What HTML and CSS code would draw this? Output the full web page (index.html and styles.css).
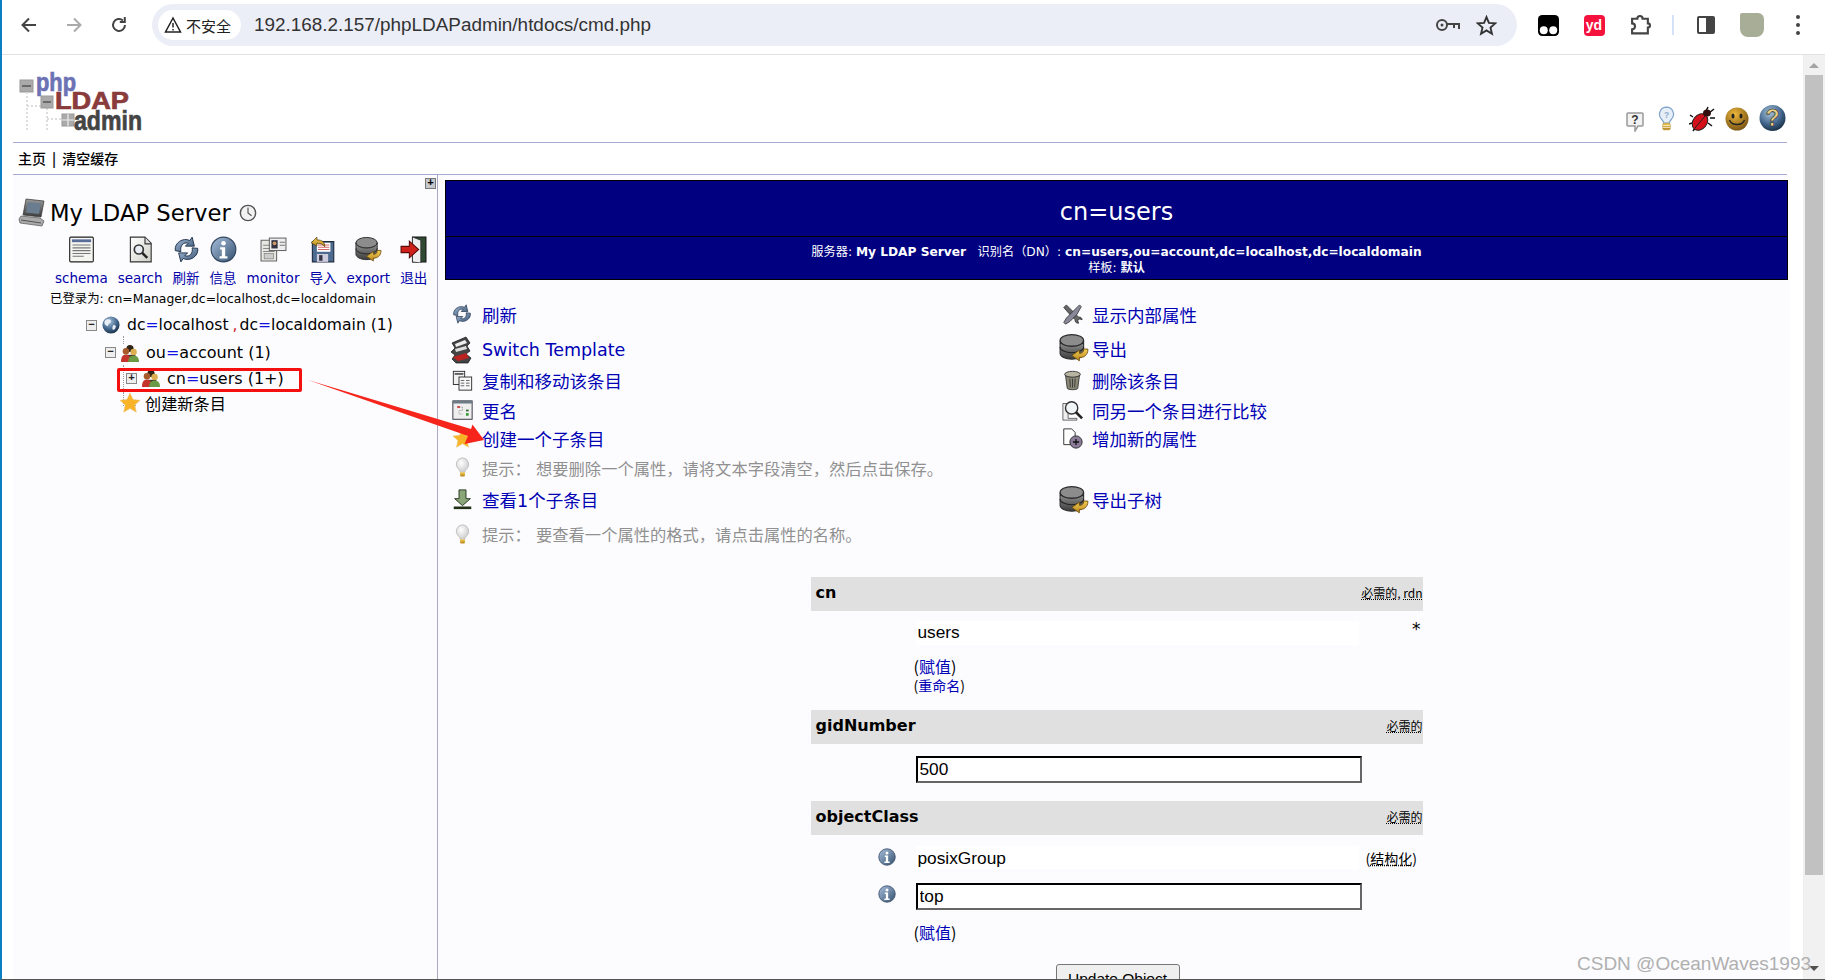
FILE: index.html
```html
<!DOCTYPE html>
<html lang="zh">
<head>
<meta charset="utf-8">
<title>phpLDAPadmin</title>
<link rel="stylesheet" href="styles.css">
</head>
<body>
<svg class="defs" aria-hidden="true">
<defs>
<linearGradient id="gBlue" x1="0" y1="0" x2="1" y2="1"><stop offset="0" stop-color="#a9c0dc"/><stop offset="1" stop-color="#33506f"/></linearGradient>
<linearGradient id="gGray" x1="0" y1="0" x2="0" y2="1"><stop offset="0" stop-color="#9a9a9a"/><stop offset="1" stop-color="#3c3c3c"/></linearGradient>
<linearGradient id="gPaper" x1="0" y1="0" x2="1" y2="1"><stop offset="0" stop-color="#fff"/><stop offset="1" stop-color="#cfcfc8"/></linearGradient>
<linearGradient id="gGold" x1="0" y1="0" x2="0" y2="1"><stop offset="0" stop-color="#f3cf55"/><stop offset="1" stop-color="#b8841c"/></linearGradient>
<radialGradient id="gSmile" cx=".4" cy=".3" r=".8"><stop offset="0" stop-color="#eeb83a"/><stop offset="1" stop-color="#6d4a10"/></radialGradient>
<radialGradient id="gBall" cx=".4" cy=".3" r=".8"><stop offset="0" stop-color="#a8c4dd"/><stop offset=".6" stop-color="#3c5f85"/><stop offset="1" stop-color="#10202f"/></radialGradient>
<radialGradient id="gBulb" cx=".4" cy=".35" r=".7"><stop offset="0" stop-color="#fff"/><stop offset="1" stop-color="#c8c8c8"/></radialGradient>
<symbol id="i-schema" viewBox="0 0 24 24"><rect x="1.500" y="1" width="21" height="22" rx="1" fill="#f4f4f0" stroke="#222"/><rect x="3.500" y="3" width="17" height="2.500" fill="#5a6d9a"/><path d="M4 8h16M4 10.500h16M4 13h16M4 15.500h16M4 18h10" stroke="#777" stroke-width="1"/></symbol>
<symbol id="i-search" viewBox="0 0 24 24"><path d="M3 1h13l5.500 5.500V23H3z" fill="url(#gPaper)" stroke="#333"/><path d="M16 1v6h5.500" fill="#ddd" stroke="#333"/><circle cx="10.500" cy="12" r="4" fill="#e8eef4" stroke="#333" stroke-width="1.500"/><path d="M13.500 15l4.500 4.500" stroke="#222" stroke-width="2.200"/></symbol>
<symbol id="i-refresh" viewBox="0 0 24 24"><path d="M2 13C1 6 9 1 15 4l2-3 2 8-8 0 2.500-2.500C9 5 6 9 7 14z" fill="url(#gBlue)" stroke="#1c2c44" stroke-width=".8"/><path d="M22 11c1 7-7 12-13 9l-2 3-2-8 8 0-2.500 2.500c4.500 1.500 7.500-2.500 6.500-7z" fill="url(#gBlue)" stroke="#1c2c44" stroke-width=".8"/></symbol>
<symbol id="i-info" viewBox="0 0 24 24"><circle cx="12" cy="12" r="11" fill="url(#gBlue)" stroke="#31465f"/><circle cx="12" cy="6.500" r="2" fill="#fff"/><path d="M9 10h4.500v8H15.500v2h-7v-2H10.500v-6H9z" fill="#fff"/></symbol>
<symbol id="i-monitor" viewBox="0 0 26 24"><path d="M1 3h15v20H1z" fill="#e6e6e2" stroke="#666"/><path d="M3 8h6M3 11h11M3 14h11" stroke="#888"/><rect x="4" y="16" width="9" height="5" fill="#ccc" stroke="#777" stroke-width=".6"/><rect x="9" y="1" width="16" height="12" fill="#eee" stroke="#666"/><rect x="11" y="3" width="6" height="8" fill="#334"/><circle cx="14" cy="6" r="1.800" fill="#c96"/><path d="M19 5h5M19 8h5" stroke="#777"/></symbol>
<symbol id="i-import" viewBox="0 0 24 24"><path d="M3 5h19v18H3z" fill="#4c6b8f" stroke="#1d2b3e"/><rect x="7" y="6" width="12" height="8" fill="#fff"/><path d="M8 8h10M8 10h10M8 12h10" stroke="#c55" stroke-width=".8"/><rect x="7" y="16" width="10" height="7" fill="#ccd"/><rect x="9" y="17" width="3" height="5" fill="#334"/><path d="M2 6L7 1v2.500c5 0 7 2 7 6-1.500-2.500-4-3-7-3V9z" fill="url(#gGold)" stroke="#5d430c" stroke-width=".7"/></symbol>
<symbol id="i-export" viewBox="0 0 28 26"><ellipse cx="12" cy="6" rx="11" ry="5.500" fill="#8c8c8c" stroke="#2d2d2d"/><path d="M1 6v12c0 3 5 5.500 11 5.500S23 21 23 18V6c0 3-5 5.500-11 5.500S1 9 1 6z" fill="url(#gGray)" stroke="#2d2d2d"/><path d="M1 12c0 3 5 5.500 11 5.500S23 15 23 12" fill="none" stroke="#222"/><path d="M27 14c0 6-4 8-8 8v3l-7-5 7-5v3c2.500 0 4-1 4-4z" fill="url(#gGold)" stroke="#6b4c0c" stroke-width=".8"/></symbol>
<symbol id="i-logout" viewBox="0 0 26 26"><path d="M12 1h13v24H12z" fill="#2f4a32" stroke="#111"/><path d="M12 1l8 3v22l-8-1z" fill="#eee" stroke="#222" stroke-width=".7"/><path d="M1 10h8V5l9 8-9 8v-5H1z" fill="#d0201a" stroke="#5a0c08"/></symbol>
<symbol id="i-server" viewBox="0 0 28 30"><path d="M8 1l18 2-3 16-18-2z" fill="url(#gGray)" stroke="#333" stroke-width=".7"/><path d="M10 4l13 1.500-2 10.500-13-1.500z" fill="#6a7c8f"/><path d="M3 18l19 2 4 3-2 5-22-3-1-4z" fill="#aaa" stroke="#555" stroke-width=".7"/><path d="M3 22l20 3" stroke="#555"/></symbol>
<symbol id="i-clock" viewBox="0 0 20 20"><circle cx="10" cy="10" r="8.500" fill="#f2f2f2" stroke="#555" stroke-width="1.600"/><path d="M10 4v6l4 3" fill="none" stroke="#555" stroke-width="1.300"/></symbol>
<symbol id="i-globe" viewBox="0 0 20 20"><circle cx="10" cy="10" r="9.500" fill="url(#gBall)"/><path d="M5 4c3-1 5 0 5 2s-3 2-3 4-3 1-4-1 0-4 2-5zM13 10c2 0 3 1 2 3s-2 3-3 2 0-5 1-5z" fill="#e8eef4"/></symbol>
<symbol id="i-people" viewBox="0 0 20 20"><circle cx="10" cy="5" r="4" fill="#2e2418"/><path d="M4 12h12v7H4z" fill="#3a3a2a"/><circle cx="5.500" cy="8" r="3.600" fill="#a85a2a"/><path d="M0 20c0-6 2-8 5.500-8S11 14 11 20z" fill="#c4342a"/><circle cx="14" cy="9" r="3.600" fill="#dcae50"/><path d="M8 20c0-5 2-7 6-7s6 2 6 7z" fill="#6a9a44"/></symbol>
<symbol id="i-star" viewBox="0 0 24 24"><path d="M12 1l3.300 7.300 7.700.8-5.800 5.200 1.700 7.700L12 18l-6.900 4 1.700-7.700L1 9.100l7.700-.8z" fill="#f9b326" stroke="#e9c77a" stroke-width=".6"/></symbol>
<symbol id="i-bulb" viewBox="0 0 20 26"><path d="M10 1a8 8 0 0 0-5 14c1.500 1.500 2 2.500 2 4h6c0-1.500.5-2.500 2-4a8 8 0 0 0-5-14z" fill="url(#gBulb)" stroke="#bbb"/><rect x="7" y="19" width="6" height="5" rx="1" fill="url(#gGold)"/></symbol>
<symbol id="i-bulbq" viewBox="0 0 18 26"><path d="M9 1a7.500 7.500 0 0 0-5 13c1.500 1.500 2 2.500 2 4h6c0-1.500.5-2.500 2-4a7.500 7.500 0 0 0-5-13z" fill="#e6eef8" stroke="#7fa4cc" stroke-width="1.300"/><text x="9" y="12" class="svg-q">?</text><rect x="5" y="18" width="8" height="7" rx="1.500" fill="url(#gGold)" stroke="#a98a2c" stroke-width=".6"/><path d="M5 20.500h8M5 22.500h8" stroke="#fff" stroke-width=".7"/></symbol>
<symbol id="i-tools" viewBox="0 0 24 24"><path d="M2 4l3-3 8 8 6 6c2-.5 4 1 4 3l-3-1-2 2 1 3c-3 0-4.500-2-4-4L9 12z" fill="#666" stroke="#222" stroke-width=".8"/><path d="M22 3l-2-2-7 7-8 8-3 5 2 2 5-3 8-8z" fill="#889" stroke="#222" stroke-width=".8"/></symbol>
<symbol id="i-trash" viewBox="0 0 24 24"><ellipse cx="12" cy="5" rx="9" ry="3.500" fill="#b8b4a2" stroke="#333"/><path d="M4 6l2 15c1 2 11 2 12 0l2-15c-2 3-14 3-16 0z" fill="#8b8877" stroke="#333"/><path d="M9 10l.5 10M12 10v10M15 10l-.5 10" stroke="#333"/></symbol>
<symbol id="i-compare" viewBox="0 0 24 24"><path d="M1 4h6v17h10v2H1z" fill="#eee" stroke="#333" stroke-width=".8"/><circle cx="11" cy="9" r="7" fill="#f2f5f8" stroke="#333" stroke-width="1.600"/><path d="M16 14l7 7" stroke="#222" stroke-width="3"/></symbol>
<symbol id="i-add" viewBox="0 0 24 24"><path d="M2 1h9l4 4v14H2z" fill="#fff" stroke="#222"/><circle cx="16" cy="16" r="7" fill="#8b7c9a" stroke="#222"/><path d="M12.500 16h7M16 12.500v7" stroke="#111" stroke-width="1.500"/></symbol>
<symbol id="i-copy" viewBox="0 0 24 24"><rect x="1.500" y="1.500" width="13" height="15" fill="#f0f0f0" stroke="#222"/><path d="M3 4.500h10" stroke="#555" stroke-width="2"/><rect x="8" y="8" width="14.500" height="15" fill="#f8f8f8" stroke="#222"/><path d="M10 12h4M16 12h4M10 15h4M16 15h4M10 18h4M16 18h4" stroke="#555"/></symbol>
<symbol id="i-rename" viewBox="0 0 24 24"><rect x="1" y="1" width="22" height="21" fill="#eee" stroke="#223"/><rect x="1" y="1" width="22" height="3" fill="#6c7a86"/><path d="M7 8h5v4H8v4h4" fill="none" stroke="#999" stroke-dasharray="1.500 1"/><rect x="6" y="7" width="3" height="2" fill="#c33"/><rect x="16" y="11" width="3" height="2" fill="#363"/><rect x="16" y="15" width="3" height="3" fill="#393"/></symbol>
<symbol id="i-down" viewBox="0 0 24 24"><path d="M8 1h8v10h5l-9 8-9-8h5z" fill="#8aa679" stroke="#1d2b16"/><rect x="2" y="20" width="20" height="3" fill="#223018"/></symbol>
<symbol id="i-switch" viewBox="0 0 28 28"><path d="M4 7l14-6 4 6-3 3 3 5-4 3 5 4-3 5H8l-4-4 3-4-4-3 4-4z" fill="#444" stroke="#111" stroke-width=".7"/><path d="M7 8l10-4 2 3-11 4z" fill="#eee"/><path d="M7 13l11-3 1 3-11 3z" fill="#ddd"/><path d="M5 21l13-4 3 5-11 3z" fill="#b22"/></symbol>
</defs>
</svg>

<div class="browser">
  <header class="toolbar">
    <div class="nav-buttons">
      <svg class="tb-icon" viewBox="0 0 20 20"><path d="M17 10H4M10 3.500L3.500 10l6.500 6.500" class="stroke-dark"/></svg>
      <svg class="tb-icon" viewBox="0 0 20 20"><path d="M3 10h13M10 3.500l6.500 6.500-6.500 6.500" class="stroke-muted"/></svg>
      <svg class="tb-icon" viewBox="0 0 20 20"><path d="M16 10a6 6 0 1 1-2-4.500" class="stroke-dark"/><path d="M15.800 2v5h-5" class="stroke-dark"/></svg>
    </div>
    <div class="omnibox">
      <div class="security">
        <svg class="warn" viewBox="0 0 18 18"><path d="M9 2L1.500 16h15zM9 7v4.500M9 13v1.500" fill="none" stroke="#222" stroke-width="1.500"/></svg>
        <span>不安全</span>
      </div>
      <span class="url">192.168.2.157/phpLDAPadmin/htdocs/cmd.php</span>
      <div class="omni-actions">
        <svg class="key" viewBox="0 0 26 16"><circle cx="7" cy="8" r="5" fill="none" stroke="#444" stroke-width="2"/><circle cx="7" cy="8" r="1.500" fill="#444"/><path d="M12 7h12v5M19 7v4" fill="none" stroke="#444" stroke-width="2"/></svg>
        <svg class="star" viewBox="0 0 20 20"><path d="M10 2l2.300 5.500 6 .5-4.500 4 1.400 5.800L10 14.700l-5.200 3.100 1.400-5.800-4.500-4 6-.5z" fill="none" stroke="#333" stroke-width="1.800"/></svg>
      </div>
    </div>
    <div class="extensions">
      <div class="ext"><svg class="ext-icon" viewBox="0 0 20 20"><rect x="0" y="0" width="20" height="20" rx="4" fill="#000"/><circle cx="5.500" cy="14.500" r="3.800" fill="#fff"/><circle cx="14.500" cy="14.500" r="3.800" fill="#fff"/></svg></div>
      <div class="ext"><div class="yd">yd</div></div>
      <div class="ext"><svg class="ext-icon" viewBox="0 0 20 20"><path d="M2 4h5a2.500 2.500 0 0 1 5 0h5v4.500a2 2 0 0 1 0 4V18H2v-4a2.500 2.500 0 0 0 0-5.500z" transform="translate(0 -.5)" fill="none" stroke="#444" stroke-width="2"/></svg></div>
      <div class="ext-sep"></div>
      <div class="ext"><div class="panel"><div class="panel-fill"></div></div></div>
      <div class="ext"><div class="avatar"></div></div>
      <div class="ext"><div class="dots"><i></i><i></i><i></i></div></div>
    </div>
  </header>

  <div class="viewport">
    <div class="page">
      <div class="masthead">
        <svg class="logo" viewBox="0 0 124 60">
          <rect x="1" y="8" width="13" height="12" fill="#aaa" stroke="#999"/><path d="M3 14h9" stroke="#555" stroke-width="1.500"/>
          <path d="M8 20v38M8 34h14M28 36v22M28 47h14" stroke="#ddd" stroke-width="2" stroke-dasharray="2 2"/>
          <rect x="22" y="24" width="12" height="12" fill="#aaa" stroke="#999"/><path d="M24 30h8" stroke="#555" stroke-width="1.500"/>
          <rect x="43" y="42" width="12" height="12" fill="#aaa" stroke="#999"/><path d="M49 42v12M43 48h12" stroke="#eee" stroke-width="1.200"/>
          <text x="17" y="19" class="logo-php" textLength="40" lengthAdjust="spacingAndGlyphs">php</text>
          <text x="36" y="37" class="logo-ldap" textLength="74" lengthAdjust="spacingAndGlyphs">LDAP</text>
          <text x="55" y="58" class="logo-admin" textLength="68" lengthAdjust="spacingAndGlyphs">admin</text>
        </svg>
        <div class="top-icons">
          <svg class="ti-help" viewBox="0 0 18 20"><path d="M2 1h14a1 1 0 0 1 1 1v11a1 1 0 0 1-1 1h-4l-3 5v-5H2a1 1 0 0 1-1-1V2a1 1 0 0 1 1-1z" fill="#f2f2f2" stroke="#999" stroke-width="1.500"/><text x="9" y="11.500" class="svg-q svg-q-dark">?</text></svg>
          <svg class="ti-bulb"><use href="#i-bulbq"/></svg>
          <svg class="ti-bug" viewBox="0 0 26 27"><path d="M4 12L1 10M3 18l-3 1M6 23l-2 3M17 6l2-4M20 8l5-4M21 13l5 0M19 18l4 3" stroke="#111" stroke-width="1.500"/><ellipse cx="11" cy="17" rx="7" ry="9" transform="rotate(38 11 17)" fill="#d4101a" stroke="#222"/><ellipse cx="18" cy="8" rx="4" ry="3.500" fill="#331010"/><path d="M6 23L16 11" stroke="#222"/></svg>
          <svg class="ti-smile" viewBox="0 0 24 25"><circle cx="12" cy="12" r="11.500" fill="url(#gSmile)"/><ellipse cx="8" cy="9" rx="1.500" ry="2.600" fill="#222"/><ellipse cx="16" cy="9" rx="1.500" ry="2.600" fill="#222"/><path d="M4.500 13c2 6 13 6 15 0" fill="none" stroke="#222" stroke-width="1.300"/></svg>
          <svg class="ti-q" viewBox="0 0 27 28"><circle cx="13.500" cy="14" r="13" fill="url(#gBall)"/><text x="13.500" y="22" class="svg-q svg-q-big">?</text></svg>
        </div>
      </div>
      <div class="rule"></div>
      <nav class="crumbs"><a>主页</a><span class="bar">|</span><a>清空缓存</a></nav>
      <div class="rule"></div>

      <div class="main">
        <aside class="sidebar">
          <div class="side-toggle"><span class="toggle">+</span></div>
          <h2 class="server-title">
            <svg class="server-icon"><use href="#i-server"/></svg>
            <span>My LDAP Server</span>
            <svg class="clock-icon"><use href="#i-clock"/></svg>
          </h2>
          <div class="tools">
            <a class="tool"><svg class="tool-icon"><use href="#i-schema"/></svg><span>schema</span></a>
            <a class="tool"><svg class="tool-icon"><use href="#i-search"/></svg><span>search</span></a>
            <a class="tool"><svg class="tool-icon"><use href="#i-refresh"/></svg><span>刷新</span></a>
            <a class="tool"><svg class="tool-icon"><use href="#i-info"/></svg><span>信息</span></a>
            <a class="tool"><svg class="tool-icon"><use href="#i-monitor"/></svg><span>monitor</span></a>
            <a class="tool"><svg class="tool-icon"><use href="#i-import"/></svg><span>导入</span></a>
            <a class="tool"><svg class="tool-icon"><use href="#i-export"/></svg><span>export</span></a>
            <a class="tool"><svg class="tool-icon"><use href="#i-logout"/></svg><span>退出</span></a>
          </div>
          <div class="logged">已登录为: cn=Manager,dc=localhost,dc=localdomain</div>
          <ul class="tree">
            <li class="node node-1"><span class="exp">−</span><svg class="node-icon"><use href="#i-globe"/></svg><span class="node-text">dc<b class="eq">=</b>localhost<b class="comma">,</b>dc<b class="eq">=</b>localdomain (1)</span></li>
            <li class="node node-2"><span class="exp">−</span><svg class="node-icon"><use href="#i-people"/></svg><span class="node-text">ou<b class="eq">=</b>account (1)</span></li>
            <li class="node node-3"><span class="exp">+</span><svg class="node-icon"><use href="#i-people"/></svg><span class="node-text">cn<b class="eq">=</b>users (1+)</span></li>
            <li class="node node-4"><svg class="node-icon star-icon"><use href="#i-star"/></svg><span class="node-new">创建新条目</span></li>
          </ul>
        </aside>

        <section class="content">
          <div class="banner">
            <div class="banner-title">cn=users</div>
            <div class="banner-sub">
              <div>服务器: <b>My LDAP Server</b> &nbsp; 识别名（DN）: <b>cn=users,ou=account,dc=localhost,dc=localdomain</b></div>
              <div>样板: <b>默认</b></div>
            </div>
          </div>

          <div class="actions">
            <a class="act"><span class="act-ic"><svg class="ic18"><use href="#i-refresh"/></svg></span>刷新</a>
            <a class="act"><span class="act-ic"><svg class="ic20"><use href="#i-tools"/></svg></span>显示内部属性</a>
            <a class="act act-latin"><span class="act-ic"><svg class="ic28"><use href="#i-switch"/></svg></span>Switch Template</a>
            <a class="act"><span class="act-ic"><svg class="ic30"><use href="#i-export"/></svg></span>导出</a>
            <a class="act"><span class="act-ic"><svg class="ic20"><use href="#i-copy"/></svg></span>复制和移动该条目</a>
            <a class="act"><span class="act-ic"><svg class="ic20"><use href="#i-trash"/></svg></span>删除该条目</a>
            <a class="act"><span class="act-ic"><svg class="ic20"><use href="#i-rename"/></svg></span>更名</a>
            <a class="act"><span class="act-ic"><svg class="ic20"><use href="#i-compare"/></svg></span>同另一个条目进行比较</a>
            <a class="act"><span class="act-ic"><svg class="ic20"><use href="#i-star"/></svg></span>创建一个子条目</a>
            <a class="act"><span class="act-ic"><svg class="ic20"><use href="#i-add"/></svg></span>增加新的属性</a>
            <div class="hint"><span class="act-ic"><svg class="ic20"><use href="#i-bulb"/></svg></span><span class="hint-label">提示：</span>想要删除一个属性，请将文本字段清空，然后点击保存。</div>
            <a class="act"><span class="act-ic"><svg class="ic20"><use href="#i-down"/></svg></span>查看1个子条目</a>
            <a class="act"><span class="act-ic"><svg class="ic30"><use href="#i-export"/></svg></span>导出子树</a>
            <div class="hint"><span class="act-ic"><svg class="ic20"><use href="#i-bulb"/></svg></span><span class="hint-label">提示：</span>要查看一个属性的格式，请点击属性的名称。</div>
          </div>

          <form class="attrs">
            <div class="attr-head"><span class="attr-name">cn</span><span class="attr-notes"><u>必需的</u>, <u>rdn</u></span></div>
            <div class="attr-row row-first">
              <span></span><div class="value-box">users</div><span class="note-star">*</span>
            </div>
            <div class="attr-links links-cn">
              <div class="link-line">(<a>赋值</a>)</div>
              <div class="link-line small">(<a>重命名</a>)</div>
            </div>

            <div class="attr-head"><span class="attr-name">gidNumber</span><span class="attr-notes"><u>必需的</u></span></div>
            <div class="attr-row row-input">
              <span></span><input class="value-input" value="500"><span></span>
            </div>

            <div class="attr-head head-obj"><span class="attr-name">objectClass</span><span class="attr-notes"><u>必需的</u></span></div>
            <div class="attr-row row-obj">
              <span class="attr-info"><svg class="ic16"><use href="#i-info"/></svg></span><div class="value-box box-obj">posixGroup</div><span class="note-struct">(<u>结构化</u>)</span>
            </div>
            <div class="attr-row row-second">
              <span class="attr-info"><svg class="ic16"><use href="#i-info"/></svg></span><input class="value-input" value="top"><span></span>
            </div>
            <div class="attr-links links-obj">
              <div class="link-line">(<a>赋值</a>)</div>
            </div>
            <div class="submit"><button type="button" class="update">Update Object</button></div>
          </form>
        </section>
      </div>
    </div>
    <div class="scrollbar">
      <div class="arrow-up"></div>
      <div class="thumb"></div>
      <div class="arrow-down"></div>
    </div>
  </div>

  <div class="red-box"></div>
  <svg class="red-arrow" viewBox="0 0 185 70"><path d="M2 1L165 50 166.500 45.500 178 61 158.500 65 162 57z" fill="#f6251c"/></svg>
  <div class="watermark">CSDN @OceanWaves1993</div>
</div>
</body>
</html>
```
FILE: styles.css
```css
* { box-sizing: border-box; }
html, body { margin: 0; padding: 0; height: 980px; overflow: hidden; background: #fff; }
body { font-family: "DejaVu Sans", "Noto Sans CJK SC", sans-serif; color: #000; }
.defs { display: block; width: 0; height: 0; }

.browser { position: relative; width: 1825px; height: 980px; display: flex; flex-direction: column; border-left: 2px solid #0b7fc4; border-bottom: 1px solid #555; overflow: hidden; }

/* browser chrome */
.toolbar { height: 55px; flex: none; display: flex; align-items: center; border-bottom: 1px solid #e2e2e2; padding-bottom: 4px; background: #fff; }
.nav-buttons { display: flex; gap: 25px; width: 150px; padding-left: 17px; align-items: center; }
.tb-icon { width: 20px; height: 20px; flex: none; }
.stroke-dark { fill: none; stroke: #444; stroke-width: 2; }
.stroke-muted { fill: none; stroke: #aaa; stroke-width: 2; }
.omnibox { width: 1365px; height: 42px; flex: none; background: #ebeef7; border-radius: 21px; display: flex; align-items: center; padding-left: 6px; padding-right: 20px; }
.security { height: 30px; width: 83px; background: #fff; border-radius: 15px; display: flex; align-items: center; gap: 4px; padding-left: 6px; font-size: 15px; font-family: "Noto Sans CJK SC", sans-serif; color: #222; }
.warn { width: 18px; height: 18px; }
.url { margin-left: 13px; font: 18.900px "Liberation Sans", sans-serif; color: #333; flex: 1; }
.omni-actions { display: flex; align-items: center; gap: 15px; }
.key { width: 26px; height: 16px; }
.star { width: 21px; height: 21px; }
.extensions { display: flex; align-items: center; margin-left: 8px; }
.ext { width: 46px; height: 40px; display: flex; align-items: center; justify-content: center; }
.ext-icon { width: 21px; height: 21px; }
.yd { width: 21px; height: 21px; border-radius: 4px; background: #f5123c; color: #fff; font: 700 14px/20px "Liberation Sans", sans-serif; text-align: center; }
.ext-sep { width: 2px; height: 20px; background: #d3e2f7; margin: 0 9px; }
.panel { width: 18px; height: 18px; border: 2px solid #444; border-radius: 2px; display: flex; justify-content: flex-end; }
.panel-fill { width: 7px; background: #444; }
.avatar { width: 24px; height: 24px; background: #a8ad97; border-radius: 2px 6px 8px 8px; }
.dots { display: flex; flex-direction: column; gap: 4px; }
.dots i { display: block; width: 4px; height: 4px; border-radius: 50%; background: #444; }

.viewport { flex: 1; display: flex; min-height: 0; }
.page { flex: 1; min-width: 0; padding-left: 11px; padding-right: 13px; overflow: hidden; }
.scrollbar { width: 22px; flex: none; background: #f1f1f1; display: flex; flex-direction: column; align-items: center; padding: 0 1px 0 0; border-left: 1px solid #eee; }
.arrow-up { width: 0; height: 0; margin: 8px 0 7px; border-left: 5px solid transparent; border-right: 5px solid transparent; border-bottom: 5px solid #a3a3a3; flex: none; }
.thumb { width: 18px; height: 800px; background: #c1c1c1; flex: none; }
.arrow-down { width: 0; height: 0; margin-top: auto; margin-bottom: 8px; border-left: 5px solid transparent; border-right: 5px solid transparent; border-top: 5px solid #505050; flex: none; }

/* masthead */
.masthead { height: 87px; display: flex; justify-content: space-between; align-items: flex-end; padding-bottom: 10px; background: #fff; }
.logo { width: 124px; height: 60px; margin-left: 6px; flex: none; overflow: visible; }
.logo-php { font: 700 25px "Liberation Sans", sans-serif; fill: #6c72b4; stroke: #6c72b4; stroke-width: .7; }
.logo-ldap { font: 700 24px "Liberation Sans", sans-serif; fill: #8a3b3b; stroke: #8a3b3b; stroke-width: .7; }
.logo-admin { font: 700 28px "Liberation Sans", sans-serif; fill: #444; stroke: #444; stroke-width: .7; }
.top-icons { display: flex; align-items: flex-end; gap: 14px; margin-right: 4px; }
.ti-help { width: 18px; height: 20px; }
.ti-bulb { width: 17px; height: 27px; }
.ti-bug { width: 26px; height: 27px; }
.ti-smile { width: 24px; height: 25px; margin-left: -4px; }
.ti-q { width: 27px; height: 28px; margin-left: -4px; }
.svg-q { font: 700 9px "Liberation Sans", sans-serif; fill: #8fa9c9; text-anchor: middle; }
.svg-q-dark { font-size: 12px; fill: #333; }
.svg-q-big { font-size: 23px; fill: #e6cf88; stroke: #222; stroke-width: .6; }

.rule { height: 1px; background: #a8a8d3; width: 1774px; }
.crumbs { height: 31px; display: flex; align-items: center; gap: 6px; padding: 0 0 2px 5px; font-size: 14px; background: #fff; font-family: "Noto Sans CJK SC", sans-serif; font-weight: 500; }
.crumbs .bar { font-weight: 700; color: #111; }

/* two panels */
.main { display: flex; height: 806px; background: #fcfcff; }
.sidebar { width: 425px; flex: none; border-right: 1px solid #a9a9c6; }
.side-toggle { height: 15px; display: flex; justify-content: flex-end; padding: 3px 1px 0 0; }
.toggle { width: 11px; height: 11px; background: #c4c8cc; border: 1px solid #777; font: 700 11px/8px "Liberation Mono", monospace; text-align: center; color: #000; }
.server-title { height: 46px; margin: 0; display: flex; align-items: center; padding-left: 5px; font-weight: 400; font-size: 22.700px; white-space: nowrap; }
.server-icon { width: 28px; height: 30px; flex: none; margin-right: 4px; }
.clock-icon { width: 18px; height: 18px; margin-left: 8px; }
.tools { height: 53px; display: flex; gap: 10px; padding-left: 42px; }
.tool { display: flex; flex-direction: column; align-items: center; color: #0000a8; font-size: 13.500px; line-height: 20px; white-space: nowrap; }
.tool-icon { width: 27px; height: 27px; margin-bottom: 5px; flex: none; }
.logged { height: 22px; padding-left: 37px; font-size: 12.400px; line-height: 20px; white-space: nowrap; }
.tree { margin: 1px 0 0; padding: 0; list-style: none; position: relative; }
.node { height: 26.500px; display: flex; align-items: center; font-size: 16px; white-space: nowrap; position: relative; }
.node-1 { padding-left: 73px; font-size: 15.600px; }
.node-2 { padding: 2px 0 0 92px; }
.node-3 { padding-left: 113px; }
.node-4 { padding: 0 0 3px 106px; }
.exp { width: 11px; height: 11px; border: 1px solid #888; background: #eee; font: 700 11px/8px "Liberation Mono", monospace; text-align: center; margin-right: 5px; color: #222; flex: none; }
.node-icon { width: 18px; height: 18px; flex: none; margin-right: 7px; }
.node-2::before { content: ""; position: absolute; left: 110px; top: -3px; height: 8px; border-left: 1px dotted #999; }
.node-3::before { content: ""; position: absolute; left: 110px; top: 0; height: 26px; border-left: 1px dotted #999; }
.node-4::before { content: ""; position: absolute; left: 110px; top: 0; width: 12px; height: 13px; border-left: 1px dotted #999; border-bottom: 1px dotted #999; }
.star-icon { width: 22px; height: 22px; margin-right: 4px; position: relative; }
.node-new { font-size: 16.200px; }
.eq { color: #1010e0; font-weight: 400; }
.comma { color: #d02020; font-weight: 400; margin: 0 2px 0 4px; }

/* right panel */
.content { flex: 1; min-width: 0; padding-left: 7px; padding-right: 2px; }
.banner { margin-top: 5px; height: 100px; background: #000080; border: 1px solid #000; color: #fff; display: flex; flex-direction: column; }
.banner-title { height: 56px; border-bottom: 1px solid #000; font-size: 24px; line-height: 63px; text-align: center; }
.banner-sub { flex: 1; text-align: center; font-size: 12.200px; line-height: 16px; padding-top: 7px; }

.actions { display: grid; grid-template-columns: 610px 1fr; grid-template-rows: 34px 34px 31px 29px 27px 31px 33px 36px; margin-top: 17px; }
.act, .hint { display: flex; align-items: center; white-space: nowrap; }
.act { color: #0000b4; font-size: 17.500px; }
.act-latin { padding-top: 3px; }
.hint { grid-column: 1 / -1; color: #909090; font-size: 16.300px; }
.act-ic { width: 37px; padding-right: 3px; height: 20px; display: flex; align-items: center; justify-content: center; flex: none; }
.hint-label { width: 54px; flex: none; }
.ic16 { width: 18px; height: 18px; }
.ic18 { width: 20px; height: 20px; }
.ic20 { width: 21px; height: 21px; }
.ic28 { width: 28px; height: 28px; }
.ic30 { width: 30px; height: 30px; margin-left: 4px; flex: none; }

.attrs { width: 612px; margin: 25px auto 0; }
.attr-head { height: 34px; background: #e0e0e0; display: flex; justify-content: space-between; align-items: center; padding: 0 0 3px 5px; }
.attr-name { font-size: 16px; font-weight: 700; }
.attr-notes { font-size: 12px; font-family: "Noto Sans CJK SC", sans-serif; }
.attr-notes u, .note-struct u { text-decoration: underline dotted; }
.attr-row { display: grid; grid-template-columns: 105px 446px 1fr; align-items: start; }
.row-first { margin-top: 10px; }
.row-input { margin-top: 12px; }
.row-obj { margin-top: 11px; }
.row-second { margin-top: 13px; }
.value-box { width: 443px; height: 24px; background: #fff; font: 17.300px/22px "Liberation Sans", sans-serif; padding-left: 2px; }
.box-obj { height: 23px; line-height: 24px; }
.value-input { width: 446px; height: 27px; border: 2px inset #767676; border-color: #222 #666 #666 #222; font: 17.300px "Liberation Sans", sans-serif; padding: 0 2px; background: #fff; color: #000; border-radius: 0; outline: none; display: block; }
.note-star { text-align: right; font-size: 17px; padding-right: 2px; line-height: 17px; }
.note-struct { font-size: 14px; white-space: nowrap; padding-left: 4px; line-height: 24px; font-family: "Noto Sans CJK SC", sans-serif; }
.attr-info { display: flex; justify-content: flex-end; padding-right: 20px; padding-top: 2px; }
.attr-links { padding-left: 103px; font-size: 16px; font-family: "Noto Sans CJK SC", sans-serif; }
.links-cn { padding-top: 12px; padding-bottom: 17px; }
.links-obj { padding-top: 13px; }
.link-line { height: 18px; line-height: 18px; }
.link-line.small { font-size: 14px; padding-top: 1px; }
.attr-links a { color: #0000b4; }
.head-obj { margin-top: 18px; }
.submit { display: flex; justify-content: center; margin-top: 23px; margin-left: 2px; }
.update { width: 124px; height: 30px; font: 15.500px "Liberation Sans", sans-serif; background: #efefef; border: 1px solid #767676; border-radius: 3px; color: #000; padding: 0; }

/* annotations over the screenshot */
.red-box { position: absolute; left: 115px; top: 368px; width: 185px; height: 24px; border: 3px solid #f51010; border-radius: 2px; }
.red-arrow { position: absolute; left: 304px; top: 379px; width: 185px; height: 70px; }
.watermark { position: absolute; left: 1575px; top: 953px; font: 19px "Liberation Sans", sans-serif; color: #b0b0b0; white-space: nowrap; }
```
